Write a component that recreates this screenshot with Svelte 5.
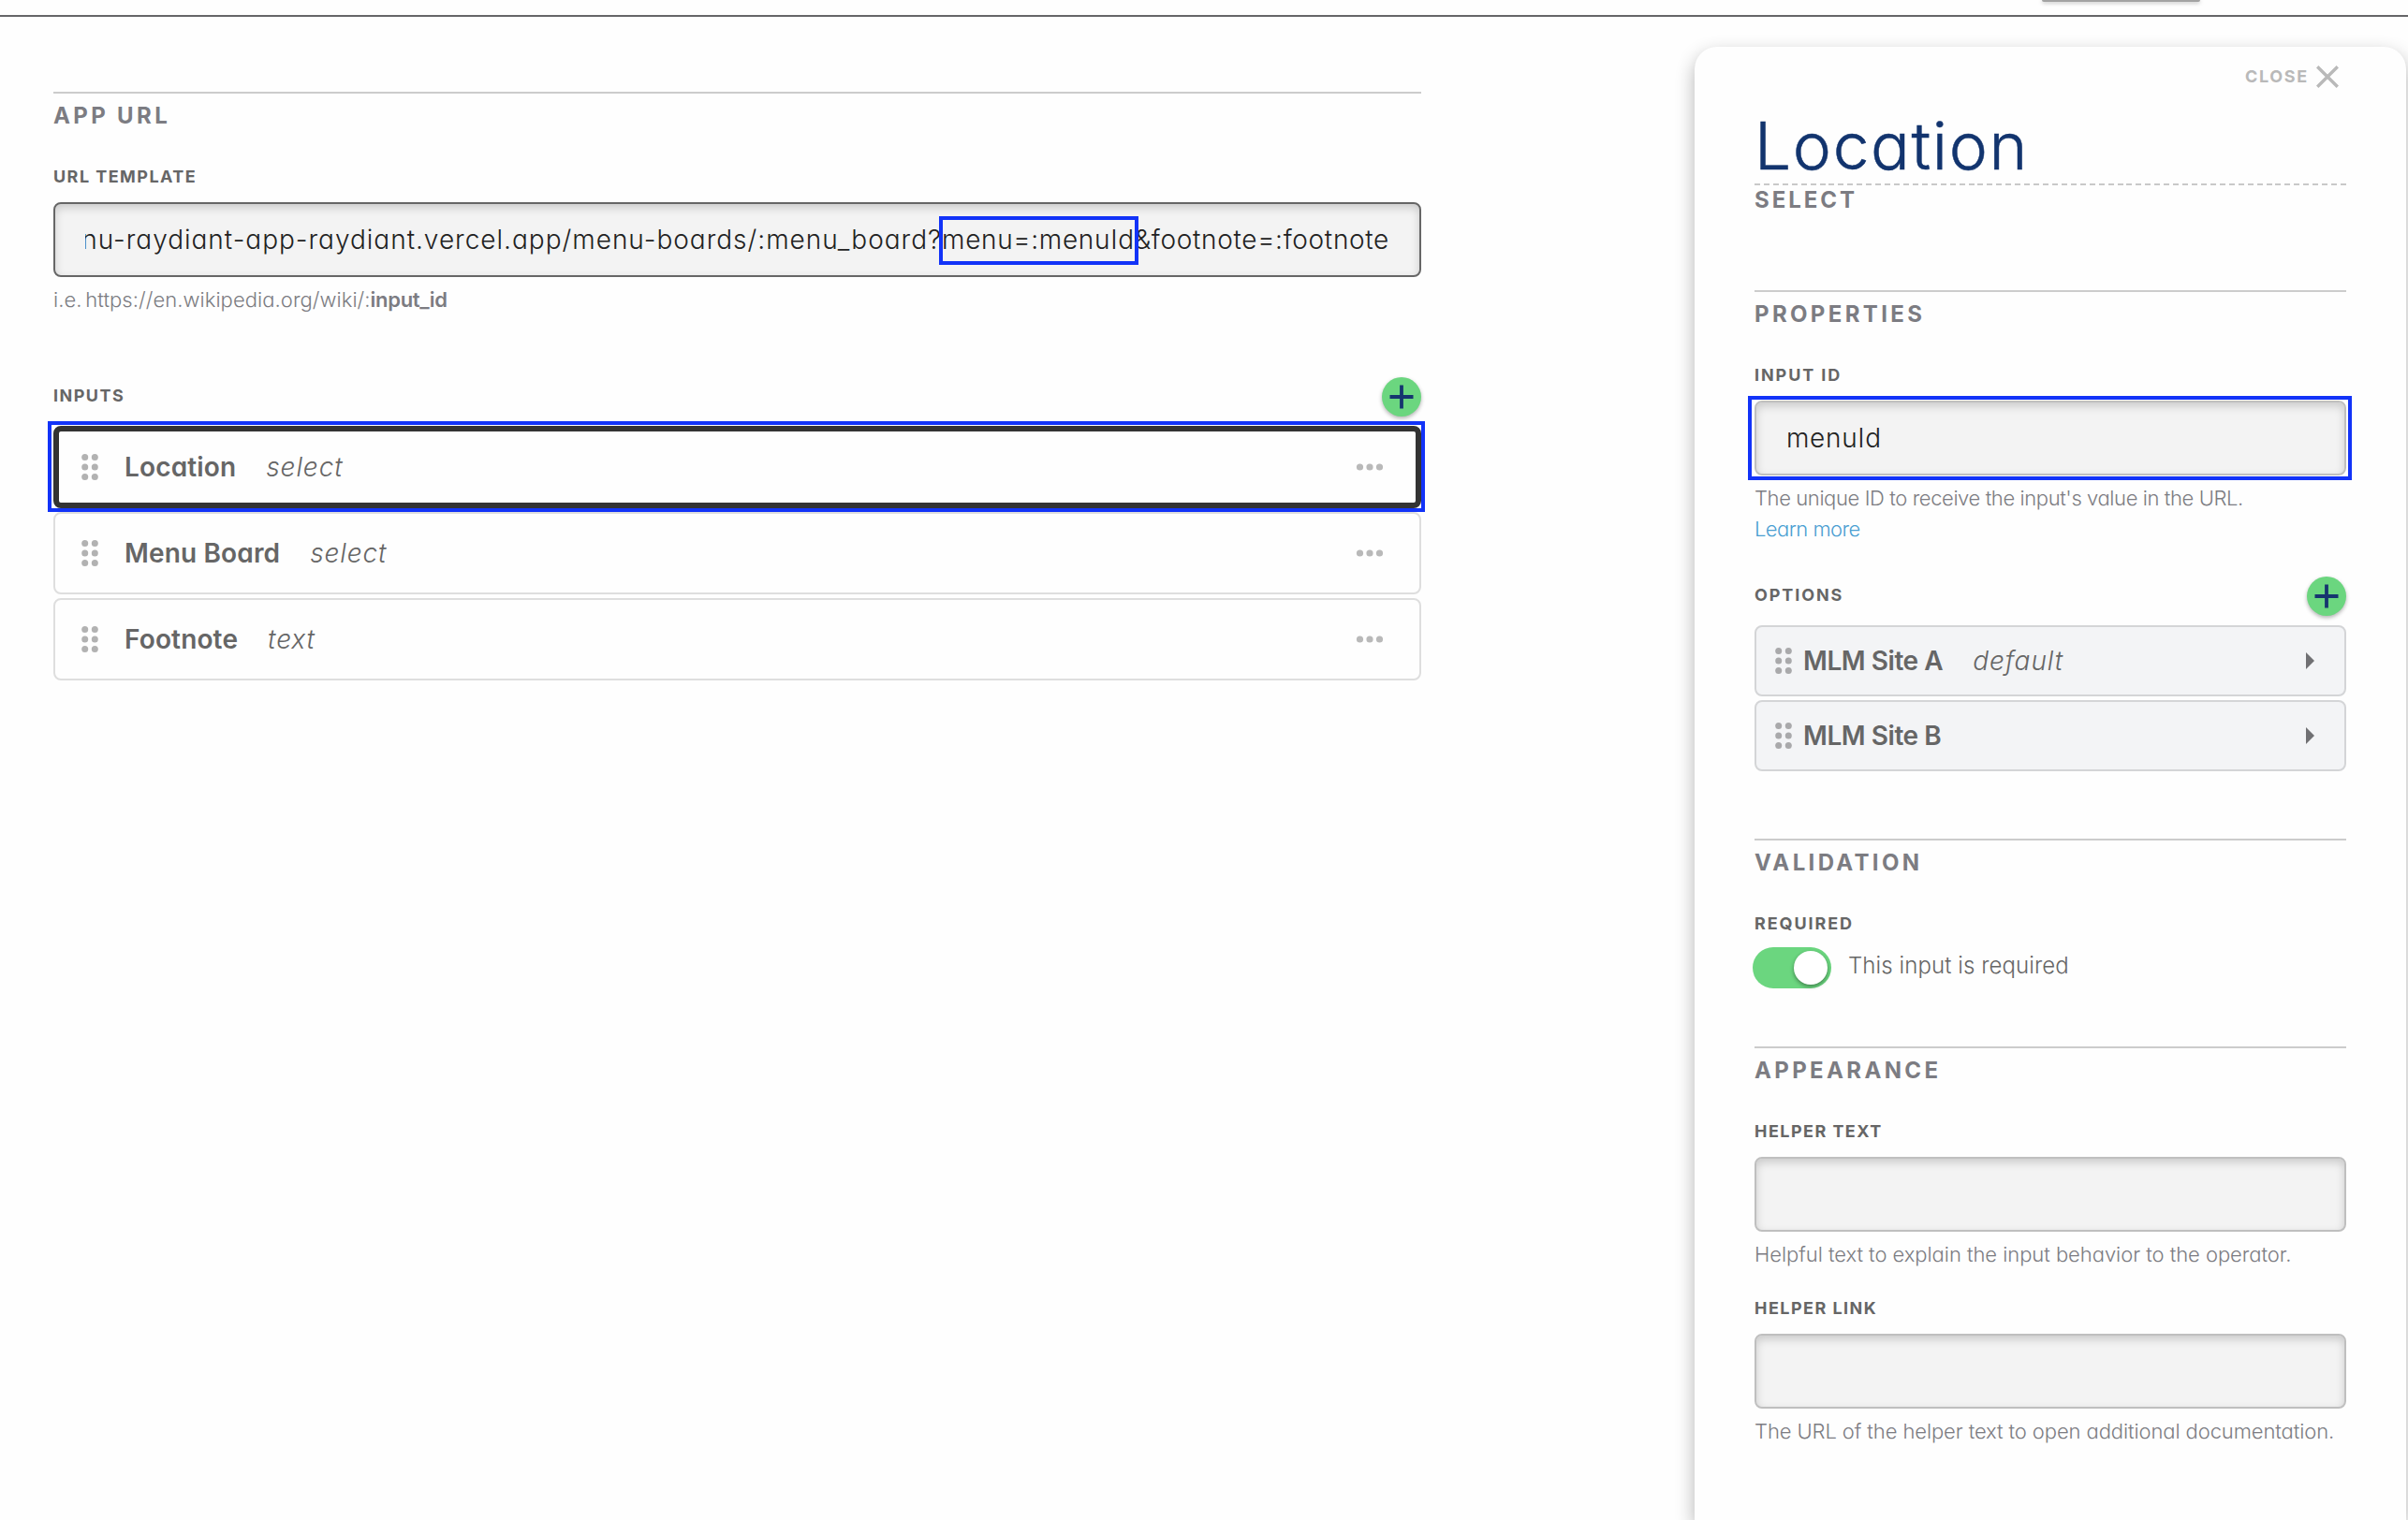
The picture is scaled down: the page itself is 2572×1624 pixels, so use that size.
<script>
  const inputs = [
    { name: 'Location', type: 'select', selected: true },
    { name: 'Menu Board', type: 'select' },
    { name: 'Footnote', type: 'text' }
  ];
  const options = [
    { name: 'MLM Site A', note: 'default' },
    { name: 'MLM Site B', note: '' }
  ];
</script>

{#snippet grip()}
  <svg class="grip" width="18" height="28" viewBox="0 0 18 28">
    {#each [3.5, 14, 24.5] as y}
      <circle cx="3.7" cy={y} r="3.5" />
      <circle cx="14.3" cy={y} r="3.5" />
    {/each}
  </svg>
{/snippet}

{#snippet add()}
  <button class="add" aria-label="Add">
    <svg width="42" height="42" viewBox="0 0 42 42">
      <path d="M21 8.5v25M8.5 21h25" stroke="#16356f" stroke-width="3.8" fill="none" />
    </svg>
  </button>
{/snippet}

<div class="page">
  <header class="topbar"><div class="tab"></div></header>
  <div class="body">
    <main class="main">
      <section class="section">
        <h2>APP URL</h2>
        <h3 class="tight">URL TEMPLATE</h3>
        <div class="field dark">
          <div class="clip"><span class="url"><span class="path">nu-raydiant-app-raydiant.vercel.app/menu-boards/:menu_board?</span>menu=:menuId&amp;footnote=:footnote</span></div>
          <div class="mark mark-url"></div>
        </div>
        <p class="help example">i.e. https://en.wikipedia.org/wiki/:<b>input_id</b></p>
        <div class="list-head inputs-head">
          <h3 class="tight">INPUTS</h3>
          {@render add()}
        </div>
        <div class="list">
          {#each inputs as item}
            <div class="card" class:selected={item.selected}>
              {@render grip()}
              <span class="name">{item.name}</span>
              <em>{item.type}</em>
              <svg class="more" width="30" height="8" viewBox="0 0 30 8">
                <circle cx="4.5" cy="4" r="3.6" />
                <circle cx="15" cy="4" r="3.6" />
                <circle cx="25.5" cy="4" r="3.6" />
              </svg>
              {#if item.selected}<div class="mark mark-card"></div>{/if}
            </div>
          {/each}
        </div>
      </section>
    </main>

    <aside class="panel">
      <div class="close">
        <span>CLOSE</span>
        <svg width="24" height="24" viewBox="0 0 24 24"><path d="M1.2 1.2l21.6 21.6M22.8 1.2L1.2 22.8" stroke="#b9b9b9" stroke-width="3.4" fill="none" /></svg>
      </div>
      <h1>Location</h1>
      <div class="dashes"></div>
      <h2 class="kind">SELECT</h2>

      <section class="section properties">
        <h2>PROPERTIES</h2>
        <h3>INPUT ID</h3>
        <div class="field">
          <span class="value">menuId</span>
          <div class="mark mark-field"></div>
        </div>
        <p class="help unique">The unique ID to receive the input's value in the URL.</p>
        <p class="help link">Learn more</p>
        <div class="list-head options-head">
          <h3>OPTIONS</h3>
          {@render add()}
        </div>
        <div class="list">
          {#each options as option}
            <div class="card option">
              {@render grip()}
              <span class="name">{option.name}</span>
              {#if option.note}<em>{option.note}</em>{/if}
              <svg class="caret" width="10" height="18" viewBox="0 0 10 18"><path d="M0 0l9 9-9 9z" /></svg>
            </div>
          {/each}
        </div>
      </section>

      <section class="section validation">
        <h2>VALIDATION</h2>
        <h3>REQUIRED</h3>
        <div class="switch-row">
          <div class="switch"><div class="knob"></div></div>
          <span>This input is required</span>
        </div>
      </section>

      <section class="section appearance">
        <h2>APPEARANCE</h2>
        <h3 class="tight">HELPER TEXT</h3>
        <div class="field"></div>
        <p class="help operator">Helpful text to explain the input behavior to the operator.</p>
        <h3 class="tight second">HELPER LINK</h3>
        <div class="field"></div>
        <p class="help docs">The URL of the helper text to open additional documentation.</p>
      </section>
    </aside>
  </div>
</div>

<style>
  :global(body) { background: #fefefe; overflow: hidden; }
  .page {
    height: 1624px;
    overflow: hidden;
    display: flex;
    flex-direction: column;
    font-family: Inter, sans-serif;
    font-feature-settings: 'cv11' 1;
    color: #666;
    box-sizing: border-box;
  }
  .page :global(*) { box-sizing: border-box; }
  h1, h2, h3, p { margin: 0; white-space: nowrap; }
  .topbar { height: 18px; flex: none; border-bottom: 2px solid #666668; padding-left: 2181px; }
  .tab { width: 169px; height: 2px; border-radius: 0 0 3px 3px; background: #a3a3a3; box-shadow: 0 1px 4px rgba(0, 0, 0, .35); }
  .body { flex: 1; display: flex; justify-content: space-between; padding: 32px 2px 0 57px; }
  .main { width: 1461px; padding-top: 48px; }
  .section { border-top: 2px solid #ccc; }
  h2 { font-size: 24px; line-height: 44px; padding-top: 2px; font-weight: 700; letter-spacing: 3.35px; color: #7c7c82; }
  h3 { font-size: 18px; line-height: 22px; padding-top: 1px; font-weight: 700; letter-spacing: 1.9px; color: #666; margin-top: 31px; }
  .tight { letter-spacing: 1.45px; }
  .field {
    position: relative;
    height: 80px;
    margin-top: 16px;
    border: 2px solid #bfbfbf;
    border-radius: 8px;
    background: #f3f3f3;
    box-shadow: inset 0 4px 10px rgba(0, 0, 0, .17);
    padding: 0 32px;
    display: flex;
    align-items: center;
    color: #222;
    font-size: 28px;
    font-weight: 300;
  }
  .dark { border-color: #666; }
  .clip { width: 100%; overflow: hidden; display: flex; justify-content: flex-end; }
  .url, .value { white-space: nowrap; line-height: 40px; letter-spacing: .67px; }
  .path { letter-spacing: .99px; }
  .mark { position: absolute; border: 4px solid #1233f8; }
  .mark-url { left: 944px; top: 13px; width: 213px; height: 52px; }
  .mark-card { left: -12px; top: -11px; width: 1471px; height: 97px; }
  .mark-field { left: -9px; top: -7px; width: 645px; height: 90px; }
  .help { font-size: 22px; line-height: 31px; padding-top: 2px; margin-top: 7px; font-weight: 300; color: #7c7c82; }
  .help b { font-weight: 600; letter-spacing: -.3px; }
  .example { word-spacing: -2.5px; letter-spacing: .06px; }
  .unique { letter-spacing: -.4px; }
  .operator { letter-spacing: -.05px; }
  .docs { letter-spacing: -.1px; }
  .link { margin-top: 0; color: #4a9fd2; letter-spacing: -.55px; }
  .list-head { display: flex; justify-content: space-between; height: 42px; }
  .list-head h3 { margin: 0; line-height: 38px; }
  .inputs-head { margin-top: 67px; }
  .options-head { margin-top: 35px; }
  .add {
    width: 42px;
    height: 42px;
    padding: 0;
    border: 0;
    border-radius: 50%;
    background: #6bd67f;
    box-shadow: 0 2px 4px rgba(0, 0, 0, .3);
  }
  .add svg { display: block; }
  .list { display: flex; flex-direction: column; gap: 4px; margin-top: 10px; }
  .card {
    position: relative;
    height: 88px;
    border: 2px solid #dedede;
    border-radius: 8px;
    display: flex;
    align-items: center;
    padding: 0 38px 0 28px;
    font-size: 28px;
    line-height: 40px;
  }
  .card.selected { border: 6px solid #333; padding: 0 34px 0 24px; }
  .grip { fill: #b2b2b2; flex: none; margin-right: 28px; }
  .name { font-weight: 600; white-space: nowrap; letter-spacing: .15px; }
  em { font-weight: 300; margin-left: 32px; letter-spacing: .9px; }
  .more { margin-left: auto; fill: #b9b9b9; }
  .option { height: 76px; background: #f3f4f6; border-color: #d4d5d7; padding: 0 31px 0 20px; }
  .option .grip { margin-right: 12px; fill: #a9a9ab; }
  .option .name { letter-spacing: -.45px; }
  .caret { margin-left: auto; fill: #707073; }
  .panel {
    width: 760px;
    border-radius: 24px 24px 0 0;
    background: #fefefe;
    box-shadow: 0 8px 20px rgba(0, 0, 0, .3);
    padding: 16px 64px 0;
  }
  .close {
    height: 30px;
    display: flex;
    justify-content: flex-end;
    align-items: center;
    padding-right: 8px;
    font-size: 18px;
    font-weight: 700;
    letter-spacing: 1.7px;
    color: #b9b9b9;
  }
  .close svg { margin: 2px 0 0 8px; }
  h1 { padding-top: 20px; line-height: 80px; font-size: 69.5px; font-weight: 300; letter-spacing: 1.6px; color: #12346e; -webkit-text-stroke: .5px #12346e; }
  .dashes { height: 2px; background: repeating-linear-gradient(90deg, #c9c9c9 0 6px, transparent 6px 9.937px); }
  .kind { line-height: 28px; letter-spacing: 2.95px; }
  .properties { margin-top: 82px; }
  .validation { margin-top: 72px; }
  .appearance { margin-top: 62px; }
  .second { margin-top: 30px; }
  .switch-row { display: flex; align-items: center; margin: 14px 0 0 -2px; font-size: 24px; font-weight: 300; letter-spacing: .08px; }
  .switch { width: 84px; height: 44px; border-radius: 22px; background: #6bd67f; padding: 4px; display: flex; justify-content: flex-end; }
  .knob { width: 36px; height: 36px; border-radius: 50%; background: #fff; box-shadow: 0 2px 4px rgba(0, 0, 0, .4); }
  .switch-row span { margin-left: 18px; line-height: 40px; padding-bottom: 4px; }
</style>
